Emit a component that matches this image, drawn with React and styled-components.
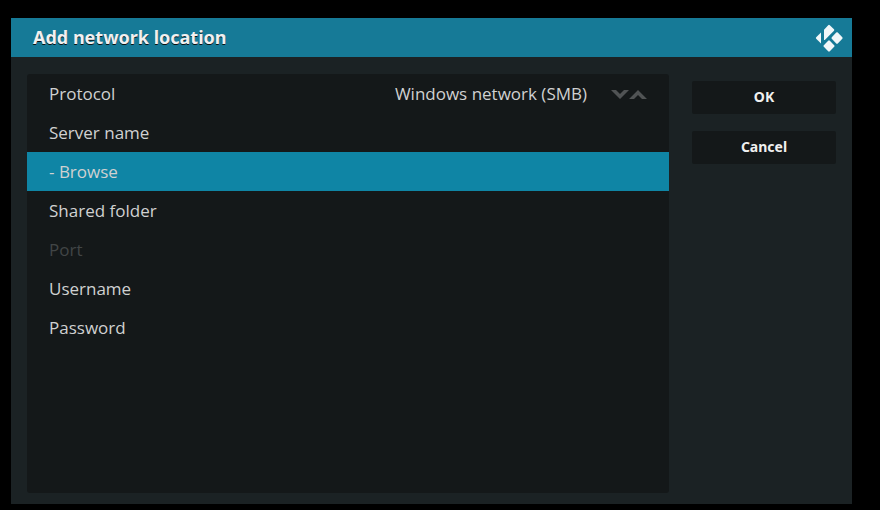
import React, { useState } from 'react';
import styled, { createGlobalStyle } from 'styled-components';

const protocols = ['Windows network (SMB)', 'Network File System (NFS)', 'WebDAV server (HTTP)'];

const App = () => {
  const [protocol, setProtocol] = useState(0);

  const step = (by) => {
    setProtocol((protocol + by + protocols.length) % protocols.length);
  };

  return (
    <>
      <GlobalStyle />
      <Screen>
        <Dialog role="dialog" aria-labelledby="dialog-title">
          <Header>
            <Title id="dialog-title">Add network location</Title>
            <KodiLogo />
          </Header>
          <Body>
            <Settings>
              <Row>
                <Label as="span">Protocol</Label>
                <Value>{protocols[protocol]}</Value>
                <Spinner>
                  <SpinButton type="button" aria-label="Next protocol" onClick={() => step(1)}>
                    <Arrow viewBox="0 0 18 9">
                      <path d="M0 0H5L9 4L13 0H18L9 9Z" />
                    </Arrow>
                  </SpinButton>
                  <SpinButton type="button" aria-label="Previous protocol" onClick={() => step(-1)}>
                    <Arrow viewBox="0 0 18 9">
                      <path d="M0 9H5L9 5L13 9H18L9 0Z" />
                    </Arrow>
                  </SpinButton>
                </Spinner>
              </Row>
              <Field id="server" label="Server name" />
              <BrowseButton type="button">- Browse</BrowseButton>
              <Field id="folder" label="Shared folder" />
              <Field id="port" label="Port" disabled />
              <Field id="username" label="Username" />
              <Field id="password" label="Password" type="password" />
            </Settings>
            <Actions>
              <ActionButton type="button">OK</ActionButton>
              <ActionButton type="button">Cancel</ActionButton>
            </Actions>
          </Body>
        </Dialog>
      </Screen>
    </>
  );
};

const Field = ({ id, label, type = 'text', disabled = false }) => (
  <Row $disabled={disabled}>
    <Label htmlFor={id}>{label}</Label>
    <Input id={id} type={type} disabled={disabled} />
  </Row>
);

const KodiLogo = () => (
  <Logo viewBox="0 0 28 28" role="img" aria-label="Kodi">
    <path d="M6 8.6V19.4L1.2 14.7Q.5 14 1.2 13.3Z" />
    <path d="M9 5.7L13.2 1.2Q14 .4 14.8 1.2L19 5.3Q19.6 6 19 6.8L9.8 16H9Z" />
    <path d="M21.2 8.6Q22 8 22.8 8.6L27.3 13.2Q28 14 27.3 14.8L22.8 19.4Q22 20 21.2 19.4L16.8 14.8Q16.1 14 16.8 13.2Z" />
    <path d="M13.2 16.7Q14 16 14.8 16.7L19.2 21.2Q20 22 19.2 22.8L14.8 27.3Q14 28 13.2 27.3L8.8 22.8Q8 22 8.8 21.2Z" />
  </Logo>
);

const GlobalStyle = createGlobalStyle`
  * {
    box-sizing: border-box;
  }

  body {
    margin: 0;
    background: #000;
    color: #d0d1d1;
    font-family: "Noto Sans", "Open Sans", sans-serif;
  }

  button,
  input {
    margin: 0;
    border: 0;
    font: inherit;
    color: inherit;
  }
`;

const Screen = styled.main`
  display: flex;
  min-height: 100vh;
  padding: 18px 28px 6px 11px;
`;

const Dialog = styled.section`
  display: flex;
  flex: 1;
  flex-direction: column;
  background: #1b2224;
`;

const Header = styled.header`
  display: flex;
  align-items: center;
  justify-content: space-between;
  height: 39px;
  padding: 0 9px 0 22px;
  background: #167a97;
`;

const Title = styled.h1`
  margin: 0;
  padding-bottom: 2px;
  font-size: 18px;
  line-height: 24px;
  font-weight: 700;
  color: #f0f0f0;
  text-shadow: 0 1px 0 #0b1214;
`;

const Logo = styled.svg`
  width: 28px;
  height: 28px;
  fill: #f1f7f9;
`;

const Body = styled.div`
  display: flex;
  flex: 1;
  gap: 23px;
  padding: 17px 16px 11px;
`;

const Settings = styled.form`
  display: flex;
  flex: 1;
  flex-direction: column;
  min-width: 0;
  border-radius: 3px;
  background: #141819;
`;

const Row = styled.div`
  display: flex;
  align-items: center;
  height: 39px;
  padding: 0 22px;
  font-family: "Open Sans", "Noto Sans", sans-serif;
  font-size: 17px;
  color: ${(props) => (props.$disabled ? '#414546' : 'inherit')};
`;

const Label = styled.label`
  flex: none;
`;

const Value = styled.output`
  margin-left: auto;
`;

const Input = styled.input`
  flex: 1;
  min-width: 0;
  padding: 0 0 0 16px;
  background: transparent;
  text-align: right;
  outline: none;
`;

const BrowseButton = styled.button`
  height: 39px;
  padding: 0 22px;
  background: #0f85a5;
  font-family: "Open Sans", "Noto Sans", sans-serif;
  font-size: 17px;
  text-align: left;
`;

const Spinner = styled.div`
  display: flex;
  margin-left: 24px;
  padding-top: 2px;
`;

const SpinButton = styled.button`
  display: flex;
  padding: 0;
  background: transparent;
`;

const Arrow = styled.svg`
  width: 18px;
  height: 9px;
  fill: #505354;
`;

const Actions = styled.div`
  display: flex;
  flex: none;
  flex-direction: column;
  gap: 17px;
  width: 144px;
  padding-top: 7px;
`;

const ActionButton = styled.button`
  height: 33px;
  padding: 0 0 2px;
  border-radius: 2px;
  background: #141819;
  font-size: 14px;
  font-weight: 700;
  color: #f0f0f0;
`;

export default App;
